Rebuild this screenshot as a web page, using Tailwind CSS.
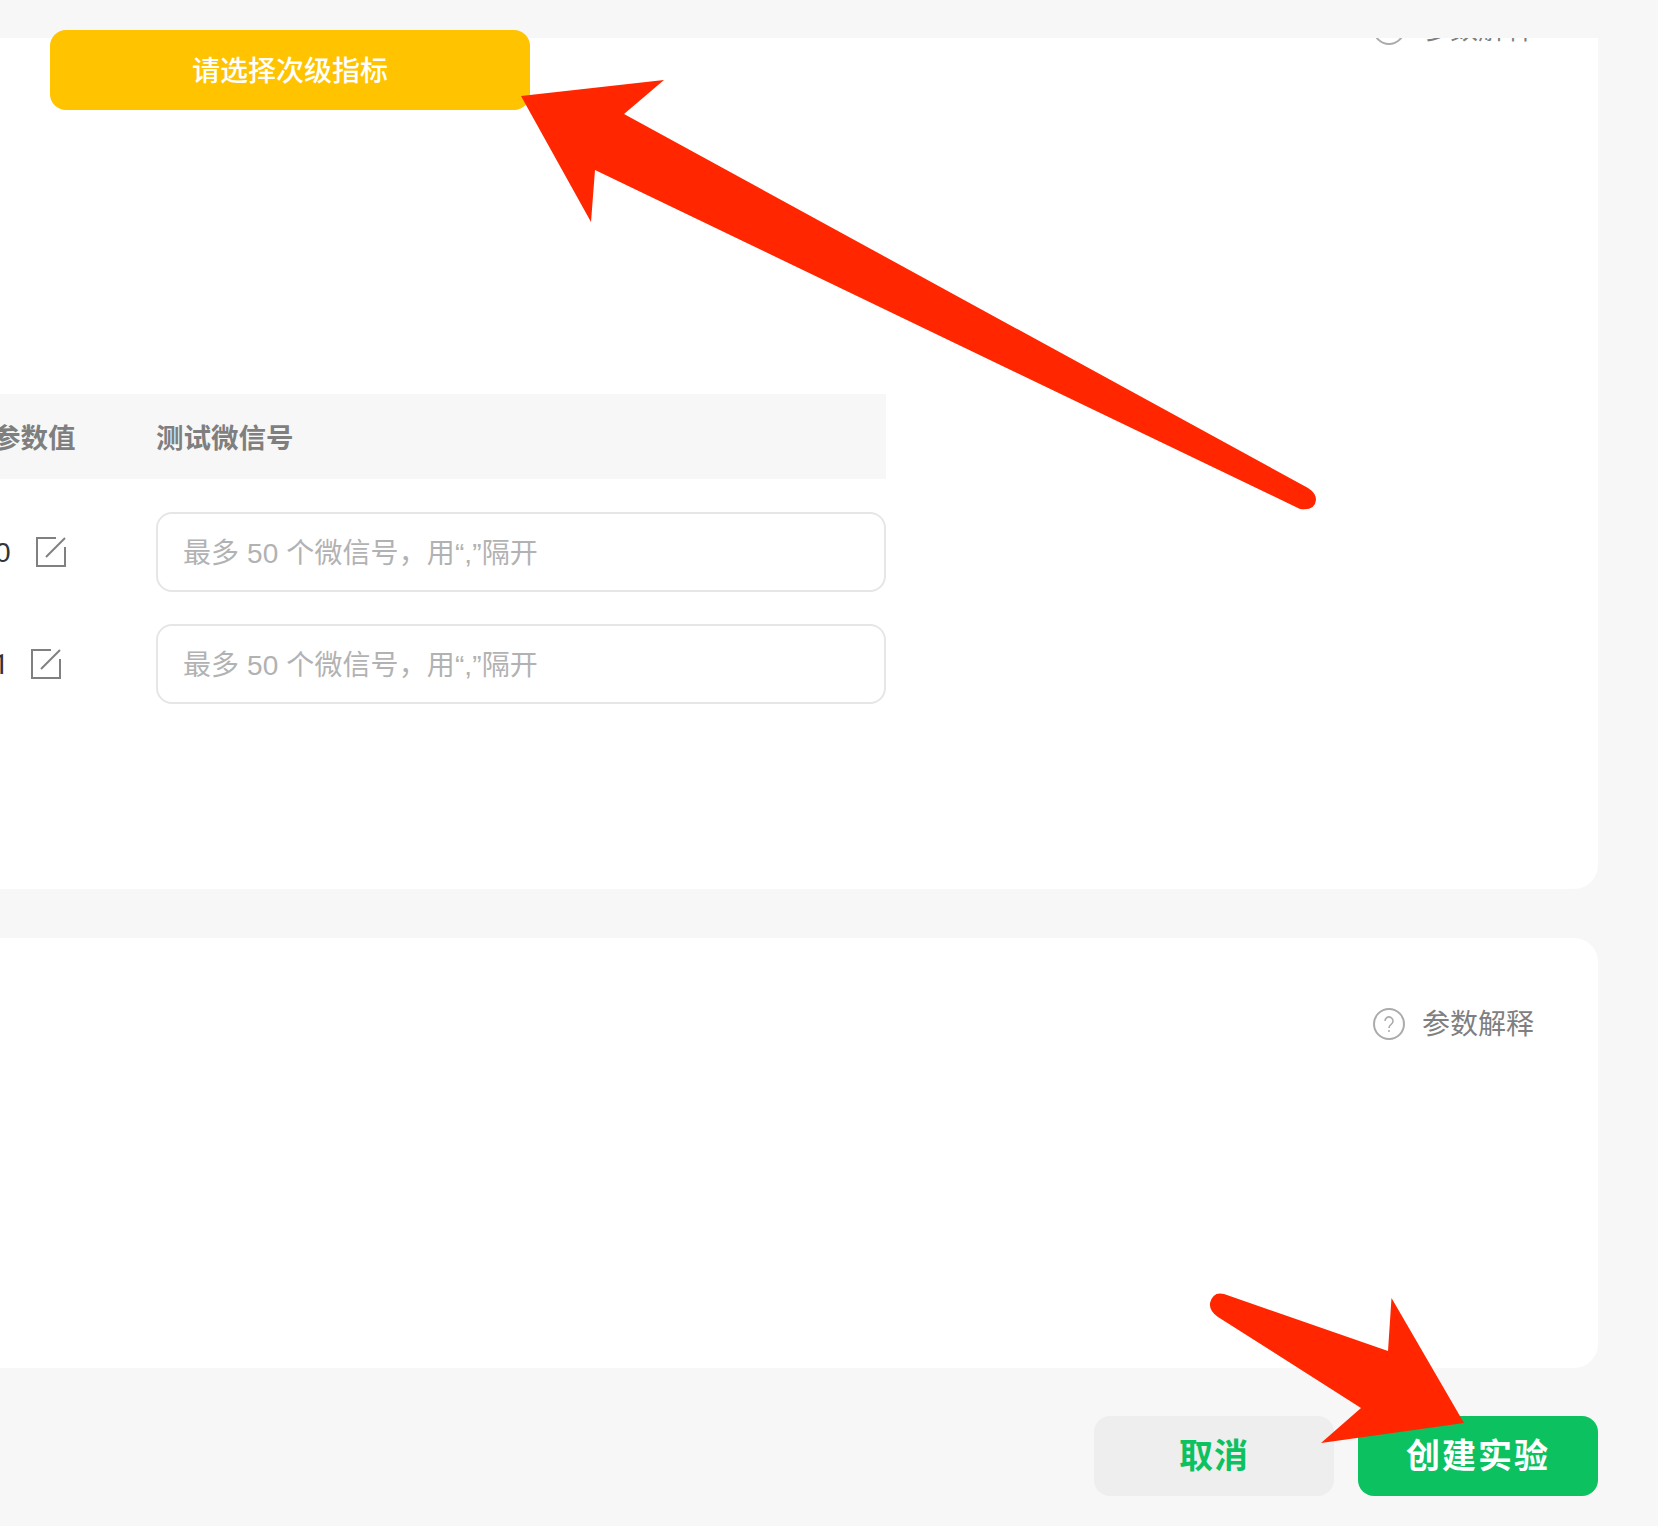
<!DOCTYPE html>
<html lang="zh-CN">

<head>
    <meta charset="utf-8" />
    <title>创建实验</title>
    <script src="https://cdn.jsdelivr.net/npm/@tailwindcss/browser@4"></script>
</head>

<body class="bg-[#f7f7f7] font-['Liberation_Sans','Noto_Sans_CJK_SC',sans-serif]">
    <div class="relative min-h-[1526px] overflow-hidden pt-[38px] pr-[60px] pb-[30px]">
        <!-- Card 1, scrolled under the top edge -->
        <div class="h-[851px] overflow-hidden rounded-br-[24px] bg-white">
            <div class="-mt-[25px] flex items-center justify-end gap-[17px] pr-[64px] text-[28px] leading-[32px] text-[#7f7f7f]">
                <svg class="w-[32px] h-[32px]" viewBox="0 0 32 32" fill="none" stroke="#ababab" stroke-width="2">
                    <circle cx="16" cy="16" r="15" />
                </svg>
                <span class="translate-y-px">参数解释</span>
            </div>

            <div class="mt-[349px] w-[886px]">
                <div class="flex h-[85px] items-center bg-[#f7f7f7] pt-[4px] text-[27.5px] font-bold text-[#7f7f7f]">
                    <div class="w-[156px] shrink-0"><span class="-ml-[7px] block">参数值</span></div>
                    <div>测试微信号</div>
                </div>
                <div class="mt-[33px] flex h-[80px] items-center">
                    <div class="flex w-[156px] shrink-0 items-center text-[28px] text-[#333333]">
                        <span class="-ml-[5px] mr-[25px] pt-[2px]">0</span>
                        <svg class="w-[30px] h-[30px]" viewBox="0 0 30 30" fill="none" stroke="#808080" stroke-width="2">
                            <path d="M20 1H1V29H29V10" />
                            <path d="M29 1L10 20" />
                        </svg>
                    </div>
                    <input class="h-[80px] w-[730px] rounded-[16px] border-2 border-[#e6e6e6] px-[25px] pt-[4px] text-[28px] tracking-[0.1px] placeholder:text-[#b2b2b2]" placeholder="最多 50 个微信号，用“,”隔开" type="text" />
                </div>
                <div class="mt-[32px] flex h-[80px] items-center">
                    <div class="flex w-[156px] shrink-0 items-center text-[28px] text-[#333333]">
                        <span class="-ml-[7px] mr-[22px] pt-[2px] font-['Roboto',sans-serif]">1</span>
                        <svg class="w-[30px] h-[30px]" viewBox="0 0 30 30" fill="none" stroke="#808080" stroke-width="2">
                            <path d="M20 1H1V29H29V10" />
                            <path d="M29 1L10 20" />
                        </svg>
                    </div>
                    <input class="h-[80px] w-[730px] rounded-[16px] border-2 border-[#e6e6e6] px-[25px] pt-[4px] text-[28px] tracking-[0.1px] placeholder:text-[#b2b2b2]" placeholder="最多 50 个微信号，用“,”隔开" type="text" />
                </div>
            </div>
        </div>

        <!-- Card 2 -->
        <div class="mt-[49px] h-[430px] rounded-r-[24px] bg-white pt-[70px]">
            <div class="flex items-center justify-end gap-[17px] pr-[64px] text-[28px] leading-[32px] text-[#7f7f7f]">
                <svg class="w-[32px] h-[32px]" viewBox="0 0 32 32" fill="none" stroke="#ababab" stroke-width="2">
                    <circle cx="16" cy="16" r="15" />
                    <path d="M12 13a4 4 0 1 1 6.2 3.3C16.7 17.3 16 18 16 20" stroke-width="1.6" />
                    <circle cx="16" cy="23" r="1" fill="#ababab" stroke="none" />
                </svg>
                <span class="translate-y-px">参数解释</span>
            </div>
        </div>

        <!-- Footer buttons -->
        <div class="mt-[48px] flex justify-end gap-[24px]">
            <button class="h-[80px] w-[240px] rounded-[16px] bg-[#eeeeee] text-[34px] font-bold tracking-[1px] text-[#0cc160]">取消</button>
            <button class="h-[80px] w-[240px] rounded-[16px] bg-[#0cc160] text-[34px] font-bold tracking-[2px] text-white">创建实验</button>
        </div>

        <!-- Highlighted select, lies over the page edge -->
        <div class="absolute left-[50px] top-[30px] flex h-[80px] w-[480px] items-center justify-center rounded-[16px] bg-[#ffc300] pt-[4px] text-[28px] font-medium text-white">请选择次级指标</div>

        <!-- Red annotation arrows -->
        <svg class="pointer-events-none absolute left-0 top-0 w-[1658px] h-[1526px]" viewBox="0 0 1658 1526" fill="#ff2600">
            <path d="M521 96L664 80L624 114L1308 488Q1316 493 1316 500Q1315 511 1300 509L595 170L591 222Z" />
            <path d="M1224 1294L1388 1351L1391.5 1298L1464 1423L1321 1443L1361 1408L1218 1317Q1209 1311 1210 1303Q1213 1291 1224 1294Z" />
        </svg>
    </div>
</body>

</html>
